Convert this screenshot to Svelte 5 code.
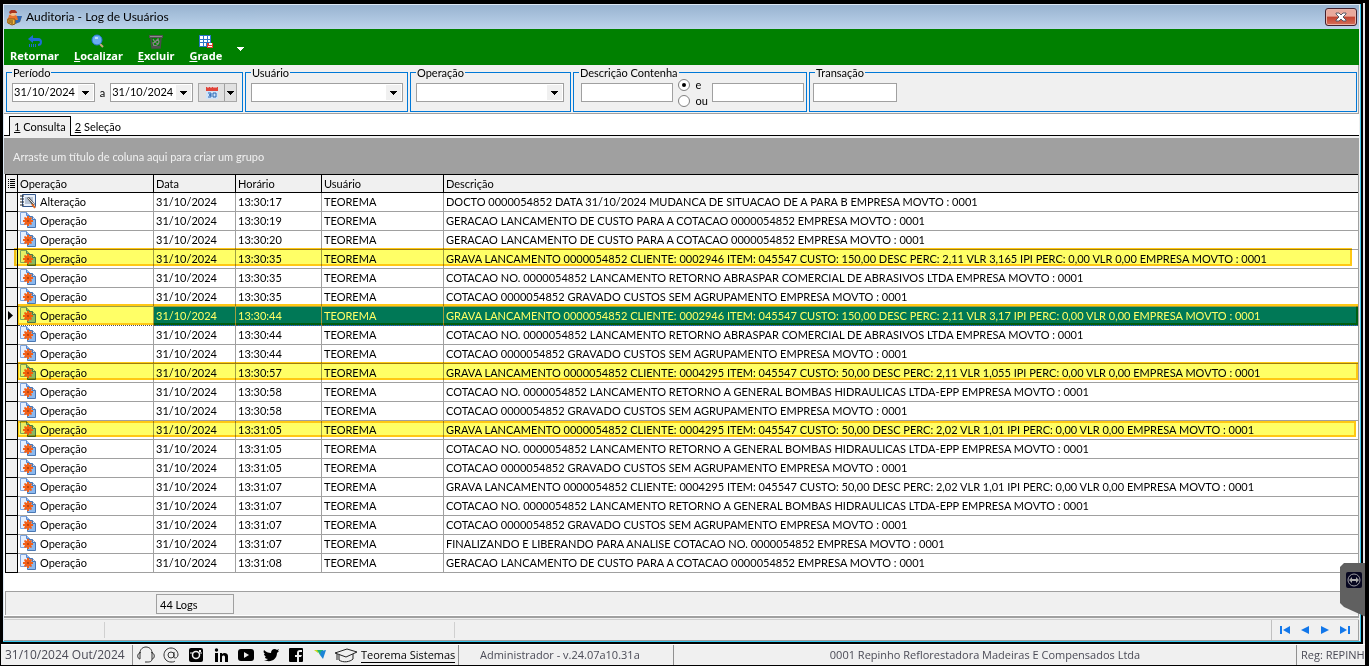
<script lang="ts">
  type Log = { kind: string; time: string; text: string; mark?: string; selected?: boolean };

  const date = "31/10/2024";
  const quote = "0000054852";

  const logs: Log[] = [
    { kind: "Alteração", time: "13:30:17", text: `DOCTO ${quote} DATA 31/10/2024 MUDANCA DE SITUACAO DE A PARA B EMPRESA MOVTO : 0001` },
    { kind: "Operação", time: "13:30:19", text: `GERACAO LANCAMENTO DE CUSTO PARA A COTACAO ${quote} EMPRESA MOVTO : 0001` },
    { kind: "Operação", time: "13:30:20", text: `GERACAO LANCAMENTO DE CUSTO PARA A COTACAO ${quote} EMPRESA MOVTO : 0001` },
    { kind: "Operação", time: "13:30:35", mark: "short", text: `GRAVA LANCAMENTO ${quote} CLIENTE: 0002946 ITEM: 045547 CUSTO: 150,00 DESC PERC: 2,11 VLR 3,165 IPI PERC: 0,00 VLR 0,00 EMPRESA MOVTO : 0001` },
    { kind: "Operação", time: "13:30:35", text: `COTACAO NO. ${quote} LANCAMENTO RETORNO ABRASPAR COMERCIAL DE ABRASIVOS LTDA EMPRESA MOVTO : 0001` },
    { kind: "Operação", time: "13:30:35", text: `COTACAO ${quote} GRAVADO CUSTOS SEM AGRUPAMENTO EMPRESA MOVTO : 0001` },
    { kind: "Operação", time: "13:30:44", mark: "tall", selected: true, text: `GRAVA LANCAMENTO ${quote} CLIENTE: 0002946 ITEM: 045547 CUSTO: 150,00 DESC PERC: 2,11 VLR 3,17 IPI PERC: 0,00 VLR 0,00 EMPRESA MOVTO : 0001` },
    { kind: "Operação", time: "13:30:44", text: `COTACAO NO. ${quote} LANCAMENTO RETORNO ABRASPAR COMERCIAL DE ABRASIVOS LTDA EMPRESA MOVTO : 0001` },
    { kind: "Operação", time: "13:30:44", text: `COTACAO ${quote} GRAVADO CUSTOS SEM AGRUPAMENTO EMPRESA MOVTO : 0001` },
    { kind: "Operação", time: "13:30:57", mark: "full", text: `GRAVA LANCAMENTO ${quote} CLIENTE: 0004295 ITEM: 045547 CUSTO: 50,00 DESC PERC: 2,11 VLR 1,055 IPI PERC: 0,00 VLR 0,00 EMPRESA MOVTO : 0001` },
    { kind: "Operação", time: "13:30:58", text: `COTACAO NO. ${quote} LANCAMENTO RETORNO A GENERAL BOMBAS HIDRAULICAS LTDA-EPP EMPRESA MOVTO : 0001` },
    { kind: "Operação", time: "13:30:58", text: `COTACAO ${quote} GRAVADO CUSTOS SEM AGRUPAMENTO EMPRESA MOVTO : 0001` },
    { kind: "Operação", time: "13:31:05", mark: "low", text: `GRAVA LANCAMENTO ${quote} CLIENTE: 0004295 ITEM: 045547 CUSTO: 50,00 DESC PERC: 2,02 VLR 1,01 IPI PERC: 0,00 VLR 0,00 EMPRESA MOVTO : 0001` },
    { kind: "Operação", time: "13:31:05", text: `COTACAO NO. ${quote} LANCAMENTO RETORNO A GENERAL BOMBAS HIDRAULICAS LTDA-EPP EMPRESA MOVTO : 0001` },
    { kind: "Operação", time: "13:31:05", text: `COTACAO ${quote} GRAVADO CUSTOS SEM AGRUPAMENTO EMPRESA MOVTO : 0001` },
    { kind: "Operação", time: "13:31:07", text: `GRAVA LANCAMENTO ${quote} CLIENTE: 0004295 ITEM: 045547 CUSTO: 50,00 DESC PERC: 2,02 VLR 1,01 IPI PERC: 0,00 VLR 0,00 EMPRESA MOVTO : 0001` },
    { kind: "Operação", time: "13:31:07", text: `COTACAO NO. ${quote} LANCAMENTO RETORNO A GENERAL BOMBAS HIDRAULICAS LTDA-EPP EMPRESA MOVTO : 0001` },
    { kind: "Operação", time: "13:31:07", text: `COTACAO ${quote} GRAVADO CUSTOS SEM AGRUPAMENTO EMPRESA MOVTO : 0001` },
    { kind: "Operação", time: "13:31:07", text: `FINALIZANDO E LIBERANDO PARA ANALISE COTACAO NO. ${quote} EMPRESA MOVTO : 0001` },
    { kind: "Operação", time: "13:31:08", text: `GERACAO LANCAMENTO DE CUSTO PARA A COTACAO ${quote} EMPRESA MOVTO : 0001` },
  ];

  let start = $state(date);
  let end = $state(date);
  let mode = $state("e");
</script>

{#snippet arrow()}
  <svg class="arrow" width="7" height="4" viewBox="0 0 7 4" aria-hidden="true"><path d="M0 0h7v1H6v1H5v1H4v1H3V3H2V2H1V1H0z" fill="currentColor" /></svg>
{/snippet}

<div class="desktop">
  <main class="window">
    <header class="titlebar">
      <svg width="17" height="17" viewBox="0 0 17 17" aria-hidden="true">
        <path d="M1 10l3-3 8 1 4-1-2 6-8 3-5-2z" fill="#d98a32" />
        <path d="M9 7l7 0-2 6-5 2z" fill="#2b67b5" />
        <path d="M3 6l4-1 4 2 1 4H2z" fill="#e8732c" />
        <circle cx="7" cy="4" r="3" fill="#f2c08d" />
        <path d="M3 3l2-2h4l2 2v1H6L4 5z" fill="#a8341f" />
        <path d="M2 10h7v5l-3 1-4-2z" fill="#efb63c" stroke="#8a5a1b" />
        <path d="M4 11v3M6 11v4" stroke="#6d4312" />
      </svg>
      <h1>Auditoria - Log de Usuários</h1>
      <button class="close" aria-label="Fechar">
        <svg width="12" height="10" viewBox="0 0 12 10"><path d="M1 1h3l2 2 2-2h3v1L8 5l3 3v1H8L6 7 4 9H1V8l3-3-3-3z" fill="#fff" stroke="#5a5a66" /></svg>
      </button>
    </header>

    <nav class="toolbar">
      <button class="tool">
        <svg width="16" height="15" viewBox="0 0 16 15"><path d="M1 5l5-4v3h5c3 0 4 2 4 4 0 3-2 4-4 4v-2c1 0 2-1 2-2 0-1-1-1-2-1H6v2z" fill="#1e6bd6" /><path d="M2.500 10v3M4.500 10v3M6.500 10v3M8.500 10v3" stroke="#1e6bd6" /></svg>
        <span>Retornar</span>
      </button>
      <button class="tool">
        <svg width="16" height="15" viewBox="0 0 16 15"><path d="M9 9l4 4" stroke="#c9a97c" stroke-width="2" /><circle cx="7" cy="6" r="5" fill="#69adf5" stroke="#2c78d6" /><path d="M5 4h3" stroke="#b9deff" stroke-width="2" /></svg>
        <span><u>L</u>ocalizar</span>
      </button>
      <button class="tool">
        <svg width="16" height="15" viewBox="0 0 16 15"><path d="M1 1h14v3H1z" fill="#505050" /><path d="M2 2.500h12" stroke="#8d8d8d" /><path d="M3 4l1 10h8l1-10" fill="none" stroke="#4c4c4c" stroke-width="1.500" /><path d="M5 5l2 3 3-3 1 3-2 3-3 1-1-3 3-1M8 9l3 1" fill="none" stroke="#858585" stroke-width="1.300" /><path d="M4 12h8v2H4z" fill="#505050" /></svg>
        <span><u>E</u>xcluir</span>
      </button>
      <button class="tool">
        <svg width="16" height="15" viewBox="0 0 16 15"><path d="M1 1h12v12H1z" fill="#2d75c8" /><path d="M2 2h3v3H2zM6 2h3v3H6zM10 2h2v3h-2zM2 6h3v2H2zM6 6h3v2H6zM10 6h2v2h-2zM2 9h3v3H2zM6 9h2v3H6z" fill="#fff" /><path d="M9 9h6v5H9z" fill="#e33b2e" /><path d="M11 9h3v2h-3zM10 12h4v1h-4z" fill="#fff" /></svg>
        <span><u>G</u>rade</span>
      </button>
      <button class="more" aria-label="Mais">{@render arrow()}</button>
    </nav>

    <form class="filters">
      <fieldset class="period">
        <legend>Período</legend>
        <div class="fields">
          <span class="date"><input aria-label="Data inicial" bind:value={start} /><button type="button" aria-label="Abrir data inicial">{@render arrow()}</button></span>
          <span>a</span>
          <span class="date"><input aria-label="Data final" bind:value={end} /><button type="button" aria-label="Abrir data final">{@render arrow()}</button></span>
          <span class="calendar">
            <button type="button" aria-label="Calendário">
              <svg width="14" height="14" viewBox="0 0 14 14"><path d="M1 3h12v10H1z" fill="#cfe3f8" /><path d="M1 1h12v4H1z" fill="#e0443a" /><path d="M3 0v2M6 0v2M9 0v2M11 0v2" stroke="#eee" /><path d="M3 7h3v2H4h2v2H3M8 7h3v4H8z" fill="none" stroke="#2766b5" /></svg>
            </button>
            <button type="button" class="drop" aria-label="Períodos">{@render arrow()}</button>
          </span>
        </div>
      </fieldset>
      <fieldset class="user">
        <legend>Usuário</legend>
        <div class="combo"><select aria-label="Usuário"><option></option></select><i>{@render arrow()}</i></div>
      </fieldset>
      <fieldset class="operation">
        <legend>Operação</legend>
        <div class="combo"><select aria-label="Operação"><option></option></select><i>{@render arrow()}</i></div>
      </fieldset>
      <fieldset class="contains">
        <legend>Descrição Contenha</legend>
        <div class="fields">
          <input class="box" aria-label="Primeiro termo" />
          <div class="radios">
            <label><input type="radio" name="mode" value="e" bind:group={mode} />e</label>
            <label><input type="radio" name="mode" value="ou" bind:group={mode} />ou</label>
          </div>
          <input class="box" aria-label="Segundo termo" />
        </div>
      </fieldset>
      <fieldset class="transaction">
        <legend>Transação</legend>
        <input class="box" aria-label="Transação" />
      </fieldset>
    </form>

    <div class="tabs" role="tablist">
      <button role="tab" aria-selected="true" class="active"><u>1</u> Consulta</button>
      <button role="tab" aria-selected="false"><u>2</u> Seleção</button>
    </div>

    <section class="grid">
      <p class="group">Arraste um título de coluna aqui para criar um grupo</p>
      <table>
        <colgroup><col class="c-mark" /><col class="c-op" /><col class="c-date" /><col class="c-time" /><col class="c-user" /><col /></colgroup>
        <thead>
          <tr>
            <th aria-label="Colunas"><svg width="7" height="9" viewBox="0 0 7 9"><path d="M0 .5h1M2 .5h5M0 2.5h1M2 2.5h5M0 4.5h1M2 4.5h5M0 6.5h1M2 6.5h5M0 8.5h1M2 8.5h5" stroke="#000" /></svg></th>
            <th>Operação</th><th>Data</th><th>Horário</th><th>Usuário</th><th>Descrição</th>
          </tr>
        </thead>
        <tbody>
          {#each logs as log}
            <tr class={log.mark ? `marked ${log.mark}` : ""} class:selected={log.selected}>
              <td class="mark">
                {#if log.selected}<svg width="5" height="9" viewBox="0 0 5 9"><path d="M0 0l5 4.5L0 9z" /></svg>{/if}
              </td>
              <td>
                <span class="kind">
                  {#if log.kind === "Alteração"}
                    <svg width="16" height="16" viewBox="0 0 16 16"><path d="M2.500 1.500h13v12h-13z" fill="#e9f0fa" stroke="#35598e" /><path d="M5 4h8v7H5z" fill="#b6c4d6" /><path d="M0 3h4M0 6h4M0 9h4M0 12h4" stroke="#222" /><path d="M7 5l2-1 6 7-2 2z" fill="#555" /><path d="M8 5l6 6" stroke="#ddd" /><path d="M12 11l3 4" stroke="#e06a25" stroke-width="2" /></svg>
                  {:else}
                    <svg width="16" height="16" viewBox="0 0 16 16"><path d="M.5 .5h6l3 3v9h-9z" fill="#e4efff" stroke="#7da5de" /><path d="M6.500 .5v3h3" fill="#9dc0f0" stroke="#5686cf" /><path d="M7.500 4.500h5l3 3v8h-8z" fill="#8cb9ee" stroke="#4a78b4" /><path d="M12.500 4.500v3h3" fill="#d8e8fb" stroke="#4a78b4" /><path d="M7 4h2v2l2-1 1 1-1 2h2v2h-2l1 2-1 1-2-1v2H7v-2l-2 1-1-1 1-2H3V8h2L4 6l1-1 2 1z" fill="#f2601a" /><circle cx="8" cy="9" r="1" fill="#a83e12" /></svg>
                  {/if}
                  {log.kind}
                </span>
              </td>
              <td>{date}</td>
              <td>{log.time}</td>
              <td>TEOREMA</td>
              <td>{log.text}</td>
            </tr>
          {/each}
        </tbody>
      </table>
      <footer class="summary"><output>44 Logs</output></footer>
    </section>

    <div class="navbar">
      <span class="slot"></span><span class="slot wide"></span>
      <div class="pager">
        <button aria-label="Primeiro"><svg width="12" height="10" viewBox="0 0 12 10"><path d="M1 1h2v8H1zM11 1v8L4 5z" /></svg></button>
        <button aria-label="Anterior"><svg width="12" height="10" viewBox="0 0 12 10"><path d="M10 1v8L2 5z" /></svg></button>
        <button aria-label="Próximo"><svg width="12" height="10" viewBox="0 0 12 10"><path d="M2 1v8l8-4z" /></svg></button>
        <button aria-label="Último"><svg width="12" height="10" viewBox="0 0 12 10"><path d="M9 1h2v8H9zM1 1v8l7-4z" /></svg></button>
      </div>
    </div>
  </main>

  <aside class="remote" aria-label="Acesso remoto">
    <svg width="26" height="54" viewBox="0 0 26 54"><path d="M26 0H4L0 4v36l4 4 22 10z" fill="#606060" /><rect x="6" y="9" width="16" height="16" rx="2" fill="#070720" /><circle cx="14" cy="17" r="6" fill="none" stroke="#9a9aa0" /><path d="M9 17l3-3v2h4v-2l3 3-3 3v-2h-4v2z" fill="#aaa" /></svg>
  </aside>

  <footer class="status">
    <span class="today">31/10/2024 Out/2024</span>
    <div class="links">
      <a href="#suporte" aria-label="Suporte"><svg viewBox="0 0 18 18"><path d="M3 7c0-8 12-8 12 0M3 6v7c-3 0-3-6 0-6zM15 6v7c3 0 3-6 0-6zM15 13c0 3-3 3-5 3H8" fill="none" stroke="#333" /></svg></a>
      <a href="#email" aria-label="E-mail"><svg viewBox="0 0 18 18"><circle cx="9" cy="9" r="3" fill="none" stroke="#333" /><path d="M12 6v5c0 2 4 1 4-2 0-4-3-7-7-7S2 5 2 9s3 7 7 7c2 0 3 0 4-1" fill="none" stroke="#333" /></svg></a>
      <a href="#instagram" aria-label="Instagram"><svg viewBox="0 0 18 18"><rect x="2" y="2" width="14" height="14" rx="2" /><path d="M3 7h3M12 7h3" stroke="#eee" /><circle cx="9" cy="9" r="3.500" fill="none" stroke="#eee" stroke-width="1.500" /><path d="M12 4h2v2h-2z" fill="#eee" /></svg></a>
      <a href="#linkedin" aria-label="LinkedIn"><svg viewBox="0 0 18 18"><path d="M3 7h3v9H3zM8 7h2v1c2-2 6-1 6 2v6h-3v-5c0-2-3-2-3 0v5H8z" /><circle cx="4.500" cy="4" r="1.700" /></svg></a>
      <a href="#youtube" aria-label="YouTube"><svg viewBox="0 0 18 18"><rect x="1" y="3" width="16" height="12" rx="3" /><path d="M7 6l5 3-5 3z" fill="#eee" /></svg></a>
      <a href="#twitter" aria-label="Twitter"><svg viewBox="0 0 18 18"><path d="M2 4c2 2 4 3 7 3 0-4 4-5 6-3l2-1-1 2h1l-2 2c0 7-7 10-13 7 2 0 3 0 4-1-2 0-3-1-3-2h1C3 10 2 9 2 8h1C2 7 1 6 2 4z" /></svg></a>
      <a href="#facebook" aria-label="Facebook"><svg viewBox="0 0 18 18"><rect x="2" y="2" width="14" height="14" rx="1" /><path d="M10 16v-5H8V9h2V7c0-2 1-3 3-3h2v2h-2c-1 0-1 0-1 1v2h3l-1 2h-2v5z" fill="#eee" /></svg></a>
      <a href="#site" aria-label="Site"><svg viewBox="0 0 18 18"><path d="M2 4h5l-1 3z" fill="#c5d91a" /><path d="M5 4h6v3L8 9z" fill="#22b573" /><path d="M9 5l5-1-3 9-3-4z" fill="#1b84d6" /></svg></a>
      <a href="#cursos" class="school"><svg class="cap" viewBox="0 0 24 18"><path d="M1 7l12-4 10 3-11 5zM5 9v5c4 3 11 2 14-1V8M3 8v6" fill="none" stroke="#222" /></svg><span>Teorema Sistemas</span></a>
    </div>
    <span class="version">Administrador - v.24.07a10.31a</span>
    <span class="company">0001 Repinho Reflorestadora Madeiras E Compensados Ltda</span>
    <span class="reg">Reg: REPINH</span>
  </footer>
</div>

<style>
  :global(body) {
    background: #000;
  }

  .desktop,
  .desktop * {
    box-sizing: border-box;
  }

  .desktop {
    position: relative;
    padding: 3px 3px 1px 0;
    overflow: hidden;
    color: #000;
    font: 11px/13px Lato, Arial, sans-serif;
  }

  button,
  input,
  select {
    margin: 0;
    padding: 0;
    border: 0;
    border-radius: 0;
    background: none;
    color: inherit;
    font: inherit;
  }

  .arrow {
    display: block;
    flex: none;
  }

  .window {
    margin-right: 3px;
    border: solid #000;
    border-width: 1px 2px 2px 3px;
    background: #f0f0f0;
    box-shadow: 2px 0 #e4e4e8, inset -1px -1px #35c6ee, inset 1px 1px #dce8f4;
    padding: 1px 2px 1px 1px;
  }

  .titlebar {
    display: flex;
    align-items: center;
    gap: 3px;
    height: 24px;
    padding: 0 2px;
    background: linear-gradient(#98b3d0, #bcd3eb);
  }

  .titlebar h1 {
    flex: 1;
    margin: 0;
    font: 12px/18px Lato, sans-serif;
  }

  .close {
    display: grid;
    place-items: center;
    width: 32px;
    height: 18px;
    border: 1px solid #43202c;
    border-radius: 3px;
    background: linear-gradient(#e9a99c 45%, #c2422f 50%, #d57059);
    box-shadow: inset 0 0 0 1px #e8b4aa;
  }

  .toolbar {
    display: flex;
    height: 36px;
    padding: 5px 0 0 6px;
    gap: 15px;
    background: #008000;
    color: #fff;
  }

  .tool {
    display: flex;
    flex-direction: column;
    align-items: center;
    font: bold 11px/14px "Noto Sans", sans-serif;
  }

  .tool svg {
    flex: none;
  }

  .more {
    padding-bottom: 2px;
    margin: auto 0;
  }

  .filters {
    display: flex;
    gap: 2px;
    padding: 1px 1px 1px 2px;
    border-right: 1px solid #a0a0a0;
    border-bottom: 1px solid #a0a0a0;
  }

  fieldset {
    min-width: 0;
    height: 46px;
    margin: 0;
    padding: 4px 4px 0 5px;
    border: 1px solid #0078d7;
  }

  legend {
    height: 13px;
    padding: 0 1px;
  }

  .period {
    width: 237px;
  }

  .user {
    width: 163px;
  }

  .operation {
    width: 161px;
    padding-right: 6px;
  }

  .contains {
    width: 234px;
    padding-left: 7px;
    padding-right: 2px;
  }

  .contains legend {
    margin-left: -2px;
  }

  .transaction {
    flex: 1;
    padding-left: 3px;
  }

  .transaction legend {
    margin-left: 2px;
  }

  .fields {
    display: flex;
    align-items: center;
    justify-content: space-between;
    height: 19px;
  }

  .period .fields {
    padding-right: 1px;
  }

  .date,
  .combo {
    display: flex;
    position: relative;
    height: 19px;
    border: 1px solid #a0a0a0;
    background: #fff;
  }

  .date {
    width: 83px;
  }

  .date input {
    flex: 1;
    min-width: 0;
    padding: 0 0 2px 1px;
  }

  .date button,
  .combo i {
    display: grid;
    place-items: center;
    width: 15px;
    margin: 1px;
    background: #f0f0f0;
  }

  .combo select {
    flex: 1;
    appearance: none;
  }

  .combo i {
    pointer-events: none;
  }

  .calendar {
    display: flex;
    height: 19px;
    border: 1px solid #a8a8a8;
    background: #e1e1e1;
  }

  .calendar button {
    display: grid;
    place-items: center;
    width: 25px;
  }

  .calendar .drop {
    width: 12px;
    border-left: 1px solid #a0a0a0;
  }

  .box {
    display: block;
    width: 92px;
    height: 19px;
    border: 1px solid #a0a0a0;
    background: #fff;
  }

  .transaction .box {
    width: 84px;
  }

  .radios {
    display: grid;
    gap: 3px;
    width: 30px;
  }

  .radios label {
    display: flex;
    align-items: center;
    gap: 6px;
  }

  .radios input {
    display: grid;
    place-items: center;
    appearance: none;
    flex: none;
    width: 12px;
    height: 12px;
    border: 1px solid #808080;
    border-radius: 50%;
    background: #fff;
  }

  .radios input:checked::before {
    content: "";
    width: 4px;
    height: 4px;
    border-radius: 50%;
    background: #000;
  }

  .tabs {
    display: flex;
    align-items: flex-end;
    height: 22px;
    padding-left: 5px;
    border-bottom: 1px solid #000;
    background: #fff;
  }

  .tabs button {
    height: 18px;
    padding: 0 4px;
  }

  .tabs .active {
    height: 20px;
    margin-bottom: -1px;
    border: 1px solid #000;
    border-bottom: 0;
    background: #f0f0f0;
  }

  .grid {
    margin-top: 2px;
    padding: 0 0 1px 1px;
    border-right: 1px solid #a0a0a0;
    border-bottom: 2px solid #a0a0a0;
    background: #fff;
  }

  .group {
    margin: 0 0 0 -1px;
    padding: 12px 9px 11px;
    background: #a0a0a0;
    color: #f0f0f0;
  }

  table {
    width: 100%;
    table-layout: fixed;
    border-spacing: 0;
  }

  .c-mark {
    width: 13px;
  }

  .c-op {
    width: 136px;
  }

  .c-date {
    width: 82px;
  }

  .c-time {
    width: 86px;
  }

  .c-user {
    width: 122px;
  }

  th,
  td {
    height: 19px;
    padding: 0 2px;
    border: solid #a0a0a0;
    border-width: 0 1px 1px 0;
    text-align: left;
    font-weight: normal;
    white-space: nowrap;
  }

  td {
    padding-bottom: 2px;
  }

  th {
    border-color: #000;
    border-top: 1px solid #000;
    background: #f0f0f0;
  }

  th:first-child,
  .mark {
    border-color: #000;
    border-left: 1px solid #000;
    background: #f0f0f0;
  }

  th svg,
  .mark svg {
    display: block;
  }

  td:last-child,
  th:last-child {
    border-right: 0;
  }

  .kind {
    display: flex;
    align-items: center;
    gap: 4px;
    height: 16px;
  }

  .kind svg {
    flex: none;
  }

  .selected td:nth-child(n + 3) {
    background: #0078d7;
    color: #fff;
  }

  .selected td {
    border-bottom: 1px dotted #555;
  }

  .selected .mark {
    border-bottom: 1px solid #000;
  }

  .marked {
    position: relative;
  }

  /* highlighter strokes run over the row, as if drawn with a marker */
  .marked .mark::after {
    content: "";
    position: absolute;
    inset: -2px 0 3px 12px;
    border: 2px solid #ffc814;
    background: #ffff66;
    mix-blend-mode: multiply;
    pointer-events: none;
  }

  .marked.short .mark::after {
    right: 6px;
    left: 9px;
  }

  .marked.tall .mark::after {
    top: -3px;
    bottom: 1px;
  }

  .marked.low .mark::after {
    top: 0;
    right: 2px;
  }

  .summary {
    display: flex;
    height: 24px;
    margin-top: 18px;
    padding: 2px 0 1px 150px;
    border: 1px solid #a0a0a0;
    border-right: 0;
    border-bottom: 0;
    background: #f0f0f0;
  }

  output {
    width: 78px;
    padding: 3px;
    border: 1px solid #a0a0a0;
  }

  .navbar {
    display: flex;
    height: 22px;
    margin-top: 1px;
    border-top: 1px solid #d0d0d0;
    border-bottom: 1px solid #a0a0a0;
  }

  .slot {
    width: 101px;
    margin: 2px 0;
    border-right: 1px solid #d0d0d0;
  }

  .wide {
    width: 350px;
  }

  .pager {
    display: flex;
    align-items: center;
    gap: 8px;
    margin-left: auto;
    padding: 0 7px;
    border-left: 1px solid #c0c0c0;
    border-right: 1px solid #a0a0a0;
  }

  .pager button {
    display: flex;
  }

  .pager svg {
    fill: #1277ea;
  }

  .remote {
    position: absolute;
    top: 563px;
    right: 4px;
    width: 25px;
    height: 54px;
    overflow: hidden;
  }

  .status {
    display: flex;
    height: 21px;
    margin: 0 1px;
    border-top: 1px solid #fff;
    background: #f0f0f0;
    color: #4a4a55;
    font: 11px/20px "Open Sans", sans-serif;
    white-space: nowrap;
    overflow: hidden;
  }

  .today {
    width: 132px;
    padding-left: 4px;
    border-right: 1px solid #909090;
    font-size: 12px;
  }

  .links {
    display: flex;
    align-items: center;
    gap: 7px;
    width: 326px;
    padding-left: 4px;
    border-right: 1px solid #909090;
  }

  .links a {
    display: flex;
    align-items: center;
    color: #000;
    text-decoration: none;
  }

  .links svg {
    width: 18px;
    height: 18px;
  }

  .links .cap {
    width: 24px;
    margin-left: -3px;
  }

  .school {
    gap: 3px;
  }

  .school span {
    line-height: 14px;
    border-bottom: 1px solid #000;
  }

  .version {
    width: 215px;
    padding-left: 21px;
    border-right: 1px solid #909090;
  }

  .company {
    flex: 1;
    text-align: center;
    border-right: 1px solid #909090;
  }

  .reg {
    width: 68px;
    padding-left: 4px;
  }
</style>
